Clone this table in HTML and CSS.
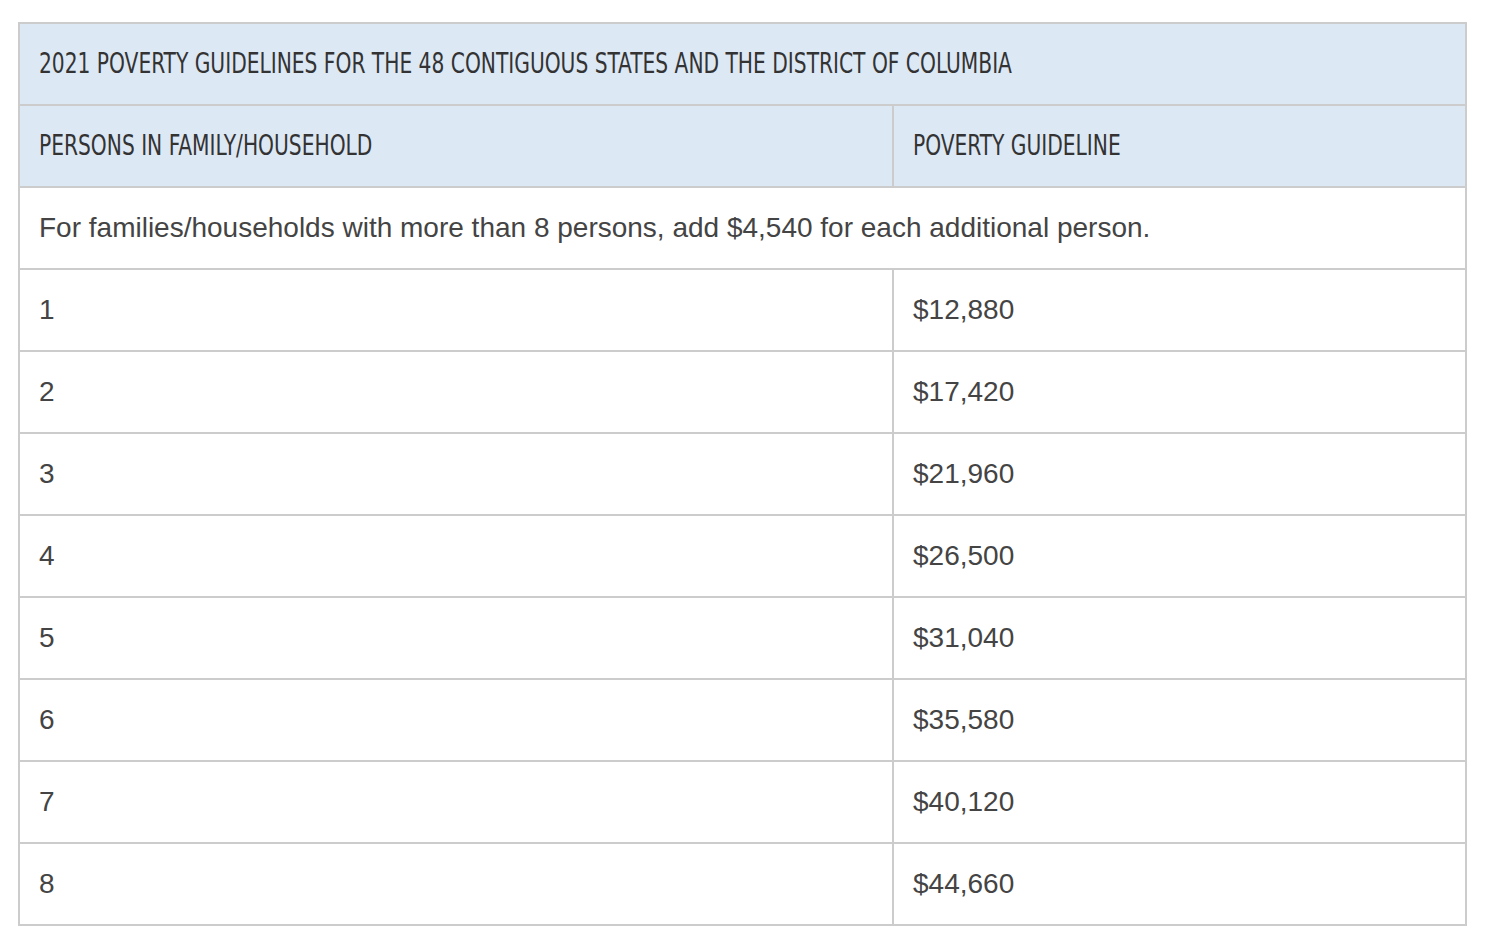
FILE: index.html
```html
<!DOCTYPE html>
<html>
<head>
<meta charset="utf-8">
<link rel="stylesheet" href="styles.css">
</head>
<body>
<div class="wrap">
<table class="guide">
  <colgroup><col class="c1"><col class="c2"></colgroup>
  <thead>
    <tr><th colspan="2"><span class="cond">2021 POVERTY GUIDELINES FOR THE 48 CONTIGUOUS STATES AND THE DISTRICT OF COLUMBIA</span></th></tr>
    <tr><th><span class="cond">PERSONS IN FAMILY/HOUSEHOLD</span></th><th><span class="cond">POVERTY GUIDELINE</span></th></tr>
  </thead>
  <tbody>
    <tr><td colspan="2">For families/households with more than 8 persons, add $4,540 for each additional person.</td></tr>
    <tr><td>1</td><td>$12,880</td></tr>
    <tr><td>2</td><td>$17,420</td></tr>
    <tr><td>3</td><td>$21,960</td></tr>
    <tr><td>4</td><td>$26,500</td></tr>
    <tr><td>5</td><td>$31,040</td></tr>
    <tr><td>6</td><td>$35,580</td></tr>
    <tr><td>7</td><td>$40,120</td></tr>
    <tr><td>8</td><td>$44,660</td></tr>
  </tbody>
</table>
</div>
</body>
</html>
```
FILE: styles.css
```css
html, body { margin: 0; padding: 0; background: #fff; }
.wrap { padding: 22px 0 0 18px; }
.guide {
  border-collapse: collapse;
  width: 1449px;
  table-layout: fixed;
  color: #333;
}
.c1 { width: 874px; }
.guide th, .guide td {
  border: 2px solid #ccc;
  height: 82px;
  padding: 0 20px;
  text-align: left;
  box-sizing: border-box;
  white-space: nowrap;
}
.guide th {
  background: #dde8f5;
  font-family: "DejaVu Sans Condensed", sans-serif;
  font-weight: normal;
  font-size: 29px;
  color: #333;
  padding-bottom: 3px;
  padding-left: 19px;
}
.cond {
  display: inline-block;
  transform: scaleX(0.775);
  transform-origin: left center;
}
.guide td {
  font-family: "Liberation Sans", Arial, sans-serif;
  font-size: 28px;
  color: #444;
  padding-left: 19px;
}
```
